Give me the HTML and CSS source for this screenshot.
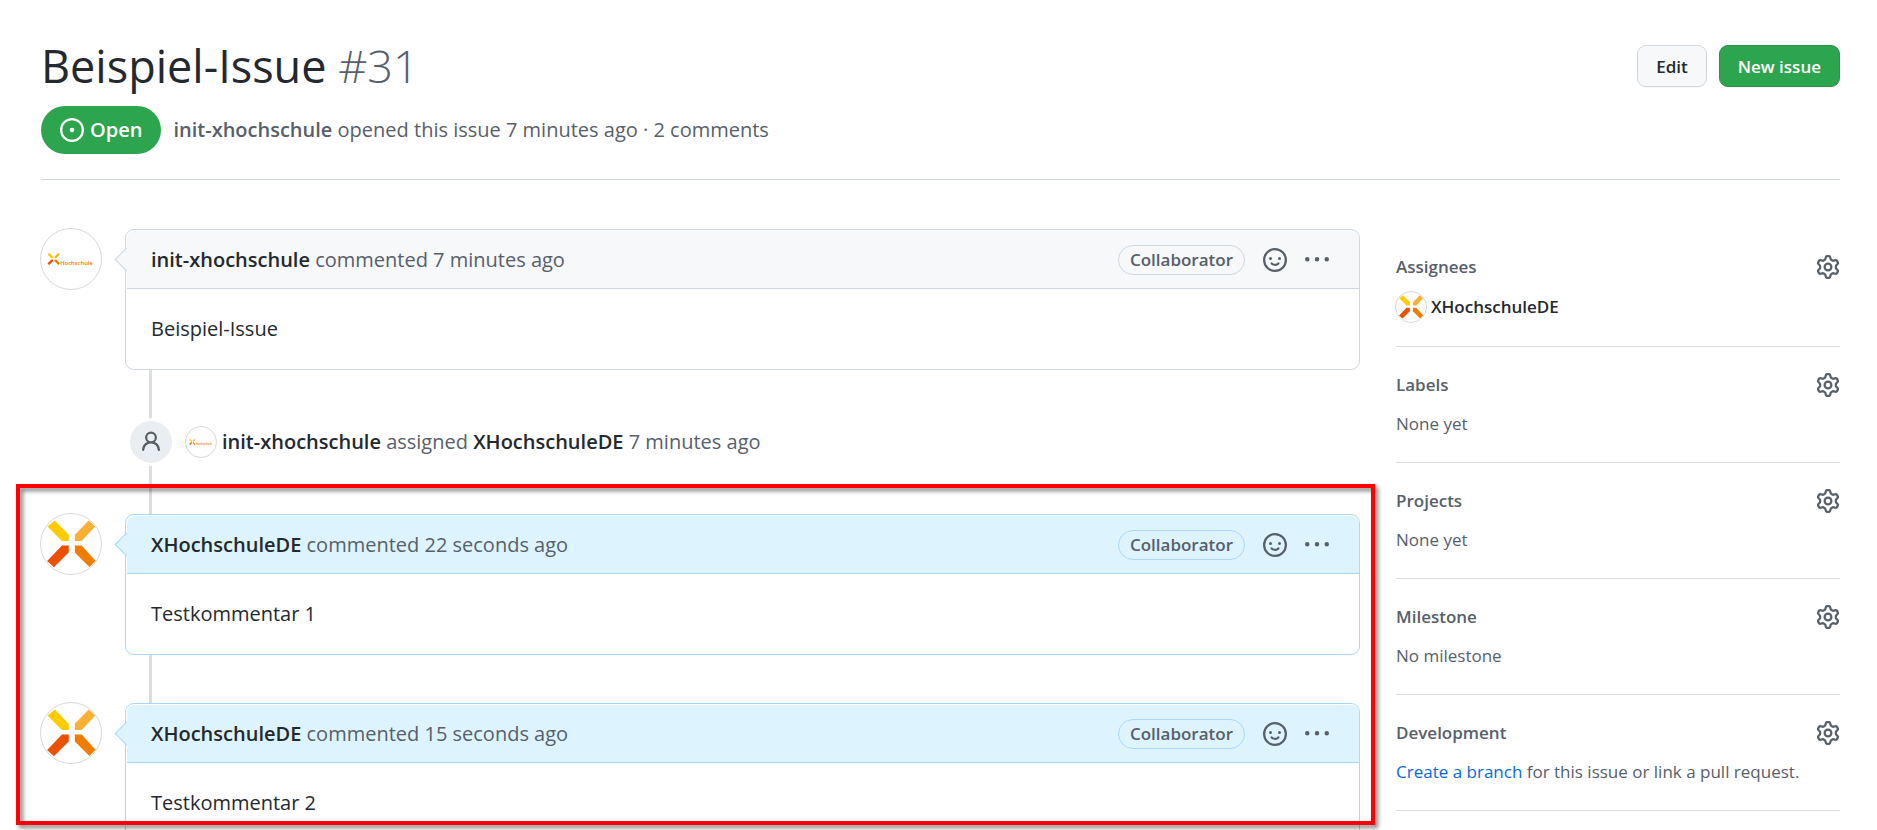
FILE: index.html
```html
<!DOCTYPE html>
<html lang="en">
<head>
    <meta charset="UTF-8">
    <meta name="viewport" content="width=device-width, initial-scale=1.0">
    <title>Beispiel-Issue #31</title>
    <link rel="stylesheet" href="styles.css">
</head>
<body>
    <!-- shared icons -->
    <svg class="sprite" width="0" height="0" aria-hidden="true">
        <symbol id="icon-open" viewBox="0 0 16 16">
            <circle cx="8" cy="8" r="7.25" fill="none" stroke="currentColor" stroke-width="1.5"/>
            <circle cx="8" cy="8" r="1.5"/>
        </symbol>
        <symbol id="icon-smiley" viewBox="0 0 16 16">
            <path fill-rule="evenodd" d="M1.5 8a6.5 6.5 0 1113 0 6.5 6.5 0 01-13 0zM8 0a8 8 0 100 16A8 8 0 008 0zM5 8a1 1 0 100-2 1 1 0 000 2zm7-1a1 1 0 11-2 0 1 1 0 012 0zM5.32 9.636a.75.75 0 011.038.175l.007.009c.103.118.22.222.35.31.264.178.683.37 1.285.37.602 0 1.02-.192 1.285-.371.13-.088.247-.192.35-.31l.007-.008a.75.75 0 111.222.87l-.018.026a1.984 1.984 0 01-.184.213c-.16.166-.338.316-.53.445-.63.418-1.37.638-2.127.629-.946 0-1.652-.308-2.126-.63a3.32 3.32 0 01-.715-.657l-.021-.027a.75.75 0 01.183-1.044z"/>
        </symbol>
        <symbol id="icon-kebab" viewBox="0 0 16 16">
            <path d="M8 9a1.5 1.5 0 100-3 1.5 1.5 0 000 3zM1.5 9a1.5 1.5 0 100-3 1.5 1.5 0 000 3zm13 0a1.5 1.5 0 100-3 1.5 1.5 0 000 3z"/>
        </symbol>
        <symbol id="icon-person" viewBox="0 0 16 16">
            <path fill-rule="evenodd" d="M10.5 5a2.5 2.5 0 11-5 0 2.5 2.5 0 015 0zm.061 3.073a4 4 0 10-5.123 0 6.004 6.004 0 00-3.431 5.142.75.75 0 001.498.07 4.5 4.5 0 018.99 0 .75.75 0 101.498-.07 6.005 6.005 0 00-3.432-5.142z"/>
        </symbol>
        <symbol id="icon-gear" viewBox="0 0 16 16">
            <path fill-rule="evenodd" d="M7.429 1.525a6.593 6.593 0 011.142 0c.036.003.108.036.137.146l.289 1.105c.147.56.55.967.997 1.189.174.086.341.183.501.29.417.278.97.423 1.53.27l1.102-.303c.11-.03.175.016.195.046.219.31.41.641.573.989.014.031.022.11-.059.19l-.815.806c-.411.406-.562.957-.53 1.456a4.588 4.588 0 010 .582c-.032.499.119 1.05.53 1.456l.815.806c.08.08.073.159.059.19a6.494 6.494 0 01-.573.99c-.02.029-.086.074-.195.045l-1.103-.303c-.559-.153-1.112-.008-1.529.27-.16.107-.327.204-.5.29-.449.222-.851.628-.998 1.189l-.289 1.105c-.029.11-.101.143-.137.146a6.613 6.613 0 01-1.142 0c-.036-.003-.108-.037-.137-.146l-.289-1.105c-.147-.56-.55-.967-.997-1.189a4.502 4.502 0 01-.501-.29c-.417-.278-.97-.423-1.53-.27l-1.102.303c-.11.03-.175-.016-.195-.046a6.492 6.492 0 01-.573-.989c-.014-.031-.022-.11.059-.19l.815-.806c.411-.406.562-.957.53-1.456a4.587 4.587 0 010-.582c.032-.499-.119-1.05-.53-1.456l-.815-.806c-.08-.08-.073-.159-.059-.19a6.44 6.44 0 01.573-.99c.02-.029.086-.075.195-.045l1.103.303c.559.153 1.112.008 1.529-.27.16-.107.327-.204.5-.29.449-.222.851-.628.998-1.189l.289-1.105c.029-.11.101-.143.137-.146zM8 0c-.236 0-.47.01-.701.03-.743.065-1.29.615-1.458 1.261l-.29 1.106c-.017.066-.078.158-.211.224a5.994 5.994 0 00-.668.386c-.123.082-.233.09-.3.071L3.27 2.776c-.644-.177-1.392.02-1.82.63a7.977 7.977 0 00-.704 1.217c-.315.675-.111 1.422.363 1.891l.815.806c.05.048.098.147.088.294a6.084 6.084 0 000 .772c.01.147-.038.246-.088.294l-.815.806c-.474.469-.678 1.216-.363 1.891.2.428.436.835.704 1.218.428.609 1.176.806 1.82.63l1.103-.303c.066-.019.176-.011.299.071.213.143.436.272.668.386.133.066.194.158.212.224l.289 1.106c.169.646.715 1.196 1.458 1.26a8.094 8.094 0 001.402 0c.743-.064 1.29-.614 1.458-1.26l.29-1.106c.017-.066.078-.158.211-.224a5.98 5.98 0 00.668-.386c.123-.082.233-.09.3-.071l1.102.302c.644.177 1.392-.02 1.82-.63.268-.382.505-.789.704-1.217.315-.675.111-1.422-.364-1.891l-.814-.806c-.05-.048-.098-.147-.088-.294a6.1 6.1 0 000-.772c-.01-.147.039-.246.088-.294l.814-.806c.475-.469.679-1.216.364-1.891a7.992 7.992 0 00-.704-1.218c-.428-.609-1.176-.806-1.82-.63l-1.103.303c-.066.019-.176.011-.299-.071a5.991 5.991 0 00-.668-.386c-.133-.066-.194-.158-.212-.224L10.16 1.29C9.99.645 9.444.095 8.701.031A8.094 8.094 0 008 0zm1.5 8a1.5 1.5 0 11-3 0 1.5 1.5 0 013 0zM11 8a3 3 0 11-6 0 3 3 0 016 0z"/>
        </symbol>
        <symbol id="logo-x" viewBox="-93 -93 186 186">
            <path fill="#ffcb00" d="M-50-73L-7-29V-9H-28L-73-54Z"/>
            <path fill="#fbb034" d="M55-73L75-54L33-9H12V-29Z"/>
            <path fill="#ea5000" d="M-74 53L-28 5H-7V26L-53 72Z"/>
            <path fill="#f07d00" d="M12 5H33L76 52L57 71L12 26Z"/>
        </symbol>
    </svg>

    <header class="issue-header">
        <div class="title-row">
            <h1>Beispiel-Issue <span class="number">#31</span></h1>
            <div class="header-actions">
                <button type="button" class="btn">Edit</button>
                <button type="button" class="btn btn-primary">New issue</button>
            </div>
        </div>
        <div class="meta-row">
            <span class="state"><svg class="icon"><use href="#icon-open"/></svg>Open</span>
            <span class="meta"><a href="#" class="author">init-xhochschule</a> opened this issue <a href="#">7 minutes ago</a> · 2 comments</span>
        </div>
    </header>

    <div class="layout">
        <main class="timeline">
            <article class="entry">
                <a href="#" class="avatar" aria-label="init-xhochschule">
                    <svg viewBox="0 0 62 62">
                        <use href="#logo-x" x="5" y="23" width="16" height="16"/>
                        <text x="20" y="37" class="logo-text">Hochschule</text>
                    </svg>
                </a>
                <div class="comment">
                    <div class="comment-header">
                        <span><a href="#" class="author">init-xhochschule</a> commented <a href="#">7 minutes ago</a></span>
                        <div class="comment-actions">
                            <span class="pill">Collaborator</span>
                            <button type="button" class="icon-btn" aria-label="Add reaction"><svg class="icon"><use href="#icon-smiley"/></svg></button>
                            <button type="button" class="icon-btn" aria-label="Show options"><svg class="icon"><use href="#icon-kebab"/></svg></button>
                        </div>
                    </div>
                    <p class="comment-body">Beispiel-Issue</p>
                </div>
            </article>

            <div class="event">
                <span class="event-badge"><svg class="icon"><use href="#icon-person"/></svg></span>
                <a href="#" class="avatar avatar-small" aria-label="init-xhochschule">
                    <svg viewBox="0 0 62 62">
                        <use href="#logo-x" x="5" y="23" width="16" height="16"/>
                        <text x="20" y="37" class="logo-text">Hochschule</text>
                    </svg>
                </a>
                <span><a href="#" class="author">init-xhochschule</a> assigned <a href="#" class="author">XHochschuleDE</a> <a href="#">7 minutes ago</a></span>
            </div>

            <section class="highlighted">
                <article class="entry">
                    <a href="#" class="avatar" aria-label="XHochschuleDE"><svg><use href="#logo-x"/></svg></a>
                    <div class="comment own">
                        <div class="comment-header">
                            <span><a href="#" class="author">XHochschuleDE</a> commented <a href="#">22 seconds ago</a></span>
                            <div class="comment-actions">
                                <span class="pill">Collaborator</span>
                                <button type="button" class="icon-btn" aria-label="Add reaction"><svg class="icon"><use href="#icon-smiley"/></svg></button>
                                <button type="button" class="icon-btn" aria-label="Show options"><svg class="icon"><use href="#icon-kebab"/></svg></button>
                            </div>
                        </div>
                        <p class="comment-body">Testkommentar 1</p>
                    </div>
                </article>

                <article class="entry">
                    <a href="#" class="avatar" aria-label="XHochschuleDE"><svg><use href="#logo-x"/></svg></a>
                    <div class="comment own">
                        <div class="comment-header">
                            <span><a href="#" class="author">XHochschuleDE</a> commented <a href="#">15 seconds ago</a></span>
                            <div class="comment-actions">
                                <span class="pill">Collaborator</span>
                                <button type="button" class="icon-btn" aria-label="Add reaction"><svg class="icon"><use href="#icon-smiley"/></svg></button>
                                <button type="button" class="icon-btn" aria-label="Show options"><svg class="icon"><use href="#icon-kebab"/></svg></button>
                            </div>
                        </div>
                        <p class="comment-body">Testkommentar 2</p>
                    </div>
                </article>
            </section>
        </main>

        <aside class="sidebar">
            <section class="side-item">
                <div class="side-title">
                    <h2>Assignees</h2>
                    <button type="button" class="icon-btn" aria-label="Edit assignees"><svg class="icon"><use href="#icon-gear"/></svg></button>
                </div>
                <a href="#" class="assignee">
                    <span class="avatar avatar-small"><svg><use href="#logo-x"/></svg></span>
                    XHochschuleDE
                </a>
            </section>
            <section class="side-item">
                <div class="side-title">
                    <h2>Labels</h2>
                    <button type="button" class="icon-btn" aria-label="Edit labels"><svg class="icon"><use href="#icon-gear"/></svg></button>
                </div>
                <p>None yet</p>
            </section>
            <section class="side-item">
                <div class="side-title">
                    <h2>Projects</h2>
                    <button type="button" class="icon-btn" aria-label="Edit projects"><svg class="icon"><use href="#icon-gear"/></svg></button>
                </div>
                <p>None yet</p>
            </section>
            <section class="side-item">
                <div class="side-title">
                    <h2>Milestone</h2>
                    <button type="button" class="icon-btn" aria-label="Edit milestone"><svg class="icon"><use href="#icon-gear"/></svg></button>
                </div>
                <p>No milestone</p>
            </section>
            <section class="side-item">
                <div class="side-title">
                    <h2>Development</h2>
                    <button type="button" class="icon-btn" aria-label="Link a branch"><svg class="icon"><use href="#icon-gear"/></svg></button>
                </div>
                <p><a href="#" class="link">Create a branch</a> for this issue or link a pull request.</p>
            </section>
        </aside>
    </div>
</body>
</html>
```
FILE: styles.css
```css
* {
    box-sizing: border-box;
}
body {
    margin: 0;
    padding: 36px 37px 0 41px;
    font-family: "Open Sans", "Noto Sans", sans-serif;
    font-size: 20px;
    line-height: 32px;
    color: #24292f;
    background-color: #fff;
}
a {
    color: inherit;
    text-decoration: none;
}
a:hover {
    text-decoration: underline;
}
h1, h2, p {
    margin: 0;
}
button {
    font-family: inherit;
    cursor: pointer;
}
.sprite {
    position: absolute;
}
.icon {
    display: block;
    width: 24px;
    height: 24px;
    fill: currentColor;
}
.author {
    font-weight: 600;
    color: #24292f;
}

/* header */
.issue-header {
    border-bottom: 1px solid #d0d7de;
    padding-bottom: 25px;
}
.title-row {
    display: flex;
    justify-content: space-between;
    align-items: center;
    margin-bottom: 10px;
}
h1 {
    font-size: 45px;
    font-weight: 400;
    line-height: 60px;
}
.number {
    font-weight: 300;
    color: #57606a;
}
.header-actions {
    display: flex;
    gap: 12px;
}
.btn {
    height: 42px;
    padding: 0 18px;
    border: 1px solid #d5d8da;
    border-radius: 9px;
    background-color: #f6f8fa;
    box-shadow: 0 1px 0 rgba(27, 31, 36, 0.04);
    color: #24292f;
    font-size: 17px;
    font-weight: 600;
}
.btn-primary {
    border-color: #2a9147;
    background-color: #2da44e;
    color: #fff;
}
.meta-row {
    display: flex;
    align-items: center;
    gap: 12px;
    color: #57606a;
}
.meta-row .author {
    color: #57606a;
}
.state {
    display: flex;
    align-items: center;
    gap: 6px;
    height: 48px;
    padding: 0 19px;
    border-radius: 24px;
    background-color: #2da44e;
    color: #fff;
    font-weight: 600;
}

/* columns */
.layout {
    display: grid;
    grid-template-columns: minmax(0, 1fr) 444px;
    gap: 36px;
    align-items: start;
    padding-top: 49px;
}

/* timeline */
.timeline {
    position: relative;
}
.timeline::before {
    content: "";
    position: absolute;
    top: 0;
    bottom: 0;
    left: 108px;
    width: 3px;
    background-color: #d8dee4;
}
.entry {
    display: flex;
    align-items: flex-start;
    gap: 23px;
}
.avatar {
    flex: none;
    width: 62px;
    height: 62px;
    margin: -1px 0 0 -1px;
    border: 1px solid #d9d9d9;
    border-radius: 50%;
    background-color: #fff;
    overflow: hidden;
}
.avatar svg {
    display: block;
    width: 100%;
    height: 100%;
}
.avatar-small {
    width: 32px;
    height: 32px;
}
.logo-text {
    font-size: 6px;
    font-weight: 600;
    fill: #f07d00;
}
.comment {
    position: relative;
    flex: 1;
    padding: 1px 0 0 1px;
    border: 1px solid #d0d7de;
    border-radius: 9px;
    background-color: #fff;
}
.comment-header {
    display: flex;
    justify-content: space-between;
    align-items: center;
    height: 58px;
    padding: 0 30px 0 24px;
    border-bottom: 1px solid #d0d7de;
    border-radius: 8px 8px 0 0;
    background-color: #f6f8fa;
    color: #57606a;
}
/* arrow towards the avatar */
.comment-header::before {
    content: "";
    position: absolute;
    top: 21px;
    left: -8px;
    width: 16px;
    height: 16px;
    border: solid #d0d7de;
    border-width: 0 0 1px 1px;
    background-color: #f6f8fa;
    transform: rotate(45deg);
}
.comment-actions {
    display: flex;
    align-items: center;
    gap: 18px;
}
.pill {
    height: 30px;
    padding: 0 11px;
    border: 1px solid #d0d7de;
    border-radius: 15px;
    font-size: 17px;
    font-weight: 600;
    line-height: 28px;
}
.icon-btn {
    padding: 0;
    border: none;
    background: none;
    color: #57606a;
}
.comment-body {
    padding: 24px;
}
.own,
.own .comment-header,
.own .comment-header::before,
.own .pill {
    border-color: #a8d8ff;
}
.own .comment-header,
.own .comment-header::before {
    background-color: #ddf4ff;
}
.event {
    position: relative;
    display: flex;
    align-items: center;
    gap: 5px;
    margin: 48px 0;
    padding-left: 86px;
    color: #57606a;
}
.event-badge {
    display: flex;
    align-items: center;
    justify-content: center;
    width: 48px;
    height: 48px;
    margin-right: 6px;
    border: 3px solid #fff;
    border-radius: 50%;
    background-color: #eaeef2;
}
.highlighted {
    position: relative;
    display: grid;
    gap: 48px;
}
/* red frame drawn over the newest comments */
.highlighted::after {
    content: "";
    position: absolute;
    top: -30px;
    right: -15px;
    bottom: 19px;
    left: -25px;
    border: 4px solid #f00;
    filter: drop-shadow(3px 3px 2px rgba(0, 0, 0, 0.5));
    pointer-events: none;
}

/* sidebar */
.sidebar {
    font-size: 17px;
    color: #57606a;
}
.side-item {
    padding: 24px 0 22px;
    border-bottom: 1px solid #d8dee4;
}
.side-title {
    display: flex;
    justify-content: space-between;
    align-items: center;
    margin-bottom: 9px;
}
.side-title h2 {
    font-size: 17px;
    font-weight: 600;
    line-height: 28px;
}
.assignee {
    display: flex;
    align-items: center;
    gap: 4px;
    height: 34px;
    color: #24292f;
    font-weight: 600;
}
.link {
    color: #0969da;
}
```
